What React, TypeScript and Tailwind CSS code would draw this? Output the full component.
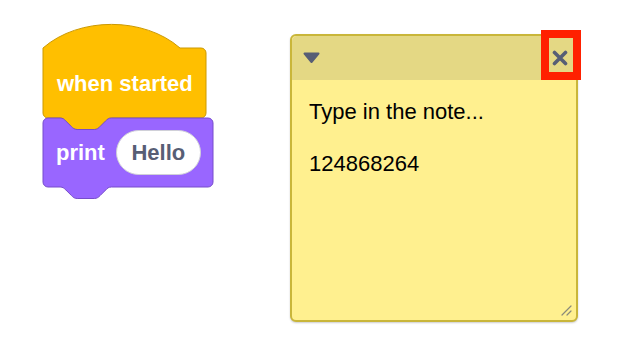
import React from "react";

const font = { fontFamily: '"Liberation Sans", Arial, sans-serif' };

function HatBlock() {
  return (
    <div className="relative w-[163px] h-[93px]">
      <svg
        className="absolute left-0 top-0 overflow-visible"
        width="163"
        height="104"
        viewBox="0 0 163 104"
      >
        <path
          d="M 0 23 C 36 -8.5 101 -8.5 137 23 L 158 23 A 5 5 0 0 1 163 28 L 163 88 A 5 5 0 0 1 158 93 L 68.5 93 c -2.9 0 -4.3 1.4 -5.7 2.9 l -5.7 5.7 c -1.4 1.4 -2.9 2.9 -5.7 2.9 h -17.2 c -2.9 0 -4.3 -1.4 -5.7 -2.9 l -5.7 -5.7 c -1.4 -1.4 -2.9 -2.9 -5.7 -2.9 L 5 93 A 5 5 0 0 1 0 88 Z"
          fill="#ffbf00"
          stroke="#cc9900"
          strokeWidth="1"
        />
      </svg>
      <div className="relative flex h-full items-center pt-[23px] pl-[14px]">
        <span className="text-[22px] font-bold text-white">when started</span>
      </div>
    </div>
  );
}

function PrintBlock() {
  return (
    <div className="relative w-[170px] h-[69px]">
      <svg
        className="absolute left-0 top-0 overflow-visible"
        width="170"
        height="81"
        viewBox="0 0 170 81"
      >
        <path
          d="M 0 5 A 5 5 0 0 1 5 0 L 17 0 c 2.9 0 4.3 1.4 5.7 2.9 l 5.7 5.7 c 1.4 1.4 2.9 2.9 5.7 2.9 h 17.2 c 2.9 0 4.3 -1.4 5.7 -2.9 l 5.7 -5.7 c 1.4 -1.4 2.9 -2.9 5.7 -2.9 L 165 0 A 5 5 0 0 1 170 5 L 170 64 A 5 5 0 0 1 165 69 L 68.5 69 c -2.9 0 -4.3 1.4 -5.7 2.9 l -5.7 5.7 c -1.4 1.4 -2.9 2.9 -5.7 2.9 h -17.2 c -2.9 0 -4.3 -1.4 -5.7 -2.9 l -5.7 -5.7 c -1.4 -1.4 -2.9 -2.9 -5.7 -2.9 L 5 69 A 5 5 0 0 1 0 64 Z"
          fill="#9966ff"
          stroke="#774dcb"
          strokeWidth="1"
        />
      </svg>
      <div className="relative flex h-full items-center pl-[13px] gap-[11px]">
        <span className="text-[22px] font-bold text-white">print</span>
        <div className="flex h-[45px] w-[85px] items-center justify-center rounded-full border border-[#d0d0d8] bg-white">
          <span className="text-[22px] font-bold text-[#575e75]">Hello</span>
        </div>
      </div>
    </div>
  );
}

function Note() {
  return (
    <div className="relative mt-[9px] flex h-[288px] w-[288px] flex-col overflow-visible rounded-[6px] border-[2px] border-[#c9b63a] bg-[#fff08f] shadow-[0_1px_2px_rgba(0,0,0,0.2)]">
      <div className="flex h-[44px] shrink-0 items-center justify-between rounded-t-[5px] bg-[#e4d884] pl-[11px] pr-[7px]">
        <svg width="17" height="12" viewBox="0 0 17 12">
          <path
            d="M 1.5 1.5 L 15.5 1.5 L 8.5 10 Z"
            fill="#575e75"
            stroke="#575e75"
            strokeWidth="2"
            strokeLinejoin="round"
          />
        </svg>
        <svg width="18" height="16" viewBox="0 0 18 16">
          <path
            d="M 3.5 2.5 L 14.5 13.5 M 14.5 2.5 L 3.5 13.5"
            stroke="#575e75"
            strokeWidth="3.6"
            strokeLinecap="round"
          />
        </svg>
      </div>
      <div className="flex flex-1 flex-col pl-[17px] pt-[19px] text-[22px] leading-[26px] text-black">
        <p>Type in the note...</p>
        <p className="mt-[26px]">124868264</p>
      </div>
      <svg
        className="absolute right-[4px] bottom-[4px]"
        width="12"
        height="12"
        viewBox="0 0 12 12"
      >
        <path
          d="M 2 11 L 11 2 M 7 11 L 11 7"
          stroke="#8a8a7a"
          strokeWidth="1.2"
          strokeLinecap="round"
        />
      </svg>
      <div className="absolute left-[249px] top-[-6px] h-[50px] w-[40px] border-[8px] border-[#ff2000]" />
    </div>
  );
}

export default function App() {
  return (
    <div className="h-[362px] w-[636px] bg-white" style={font}>
      <div className="flex items-start gap-[77px] pl-[43px] pt-[25px]">
        <div className="flex flex-col">
          <HatBlock />
          <PrintBlock />
        </div>
        <Note />
      </div>
    </div>
  );
}
